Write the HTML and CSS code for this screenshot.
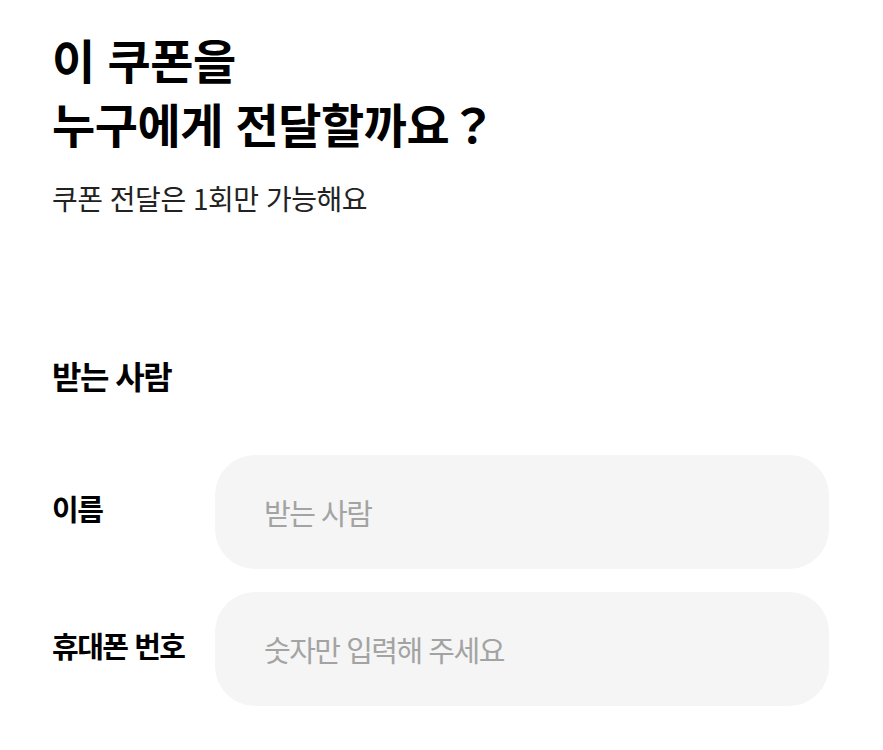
FILE: index.html
```html
<!DOCTYPE html>
<html lang="ko">
<head>
    <meta charset="UTF-8">
    <meta name="viewport" content="width=device-width, initial-scale=1.0">
    <title>쿠폰 전달</title>
    <link rel="stylesheet" href="styles.css">
</head>
<body>
    <div class="page">
        <h1 class="title">이 쿠폰을<br>누구에게 전달할까요？</h1>
        <p class="subtitle">쿠폰 전달은 1회만 가능해요</p>

        <form action="#" class="receiver">
            <h2 class="section-title">받는 사람</h2>
            <div class="field">
                <label for="name" class="field-label">이름</label>
                <input type="text" id="name" class="field-input" placeholder="받는 사람">
            </div>
            <div class="field">
                <label for="phone" class="field-label">휴대폰 번호</label>
                <input type="tel" id="phone" class="field-input" placeholder="숫자만 입력해 주세요">
            </div>
        </form>
    </div>
</body>
</html>
```

FILE: styles.css
```css
body {
    margin: 0;
    padding: 0;
    background-color: #fff;
    color: #111;
    font-family: "Noto Sans CJK KR", "Noto Sans", sans-serif;
}
.page {
    padding: 27px 54px 0 52px;
}
.title {
    margin: 0;
    font-size: 47px;
    line-height: 64px;
    font-weight: 700;
    letter-spacing: -0.5px;
    color: #000;
}
.subtitle {
    margin: 23px 0 0;
    font-size: 28px;
    line-height: 40px;
    letter-spacing: -0.5px;
    color: #222;
}
.receiver {
    margin-top: 134px;
}
.section-title {
    margin: 0 0 57px;
    font-size: 32px;
    line-height: 46px;
    font-weight: 700;
    letter-spacing: -1.5px;
    color: #000;
}
.field {
    display: flex;
    align-items: center;
    margin-bottom: 23px;
}
.field-label {
    width: 163px;
    flex-shrink: 0;
    padding-bottom: 8px;
    font-size: 29px;
    font-weight: 700;
    letter-spacing: -1.5px;
    color: #000;
}
.field-input {
    width: 614px;
    height: 114px;
    box-sizing: border-box;
    padding: 0 0 0 49px;
    border: none;
    border-radius: 40px;
    background-color: #f5f5f5;
    font-family: inherit;
    font-size: 29px;
    letter-spacing: -1.5px;
    color: #111;
    outline: none;
}
.field-input::placeholder {
    color: #a3a3a3;
}
```
